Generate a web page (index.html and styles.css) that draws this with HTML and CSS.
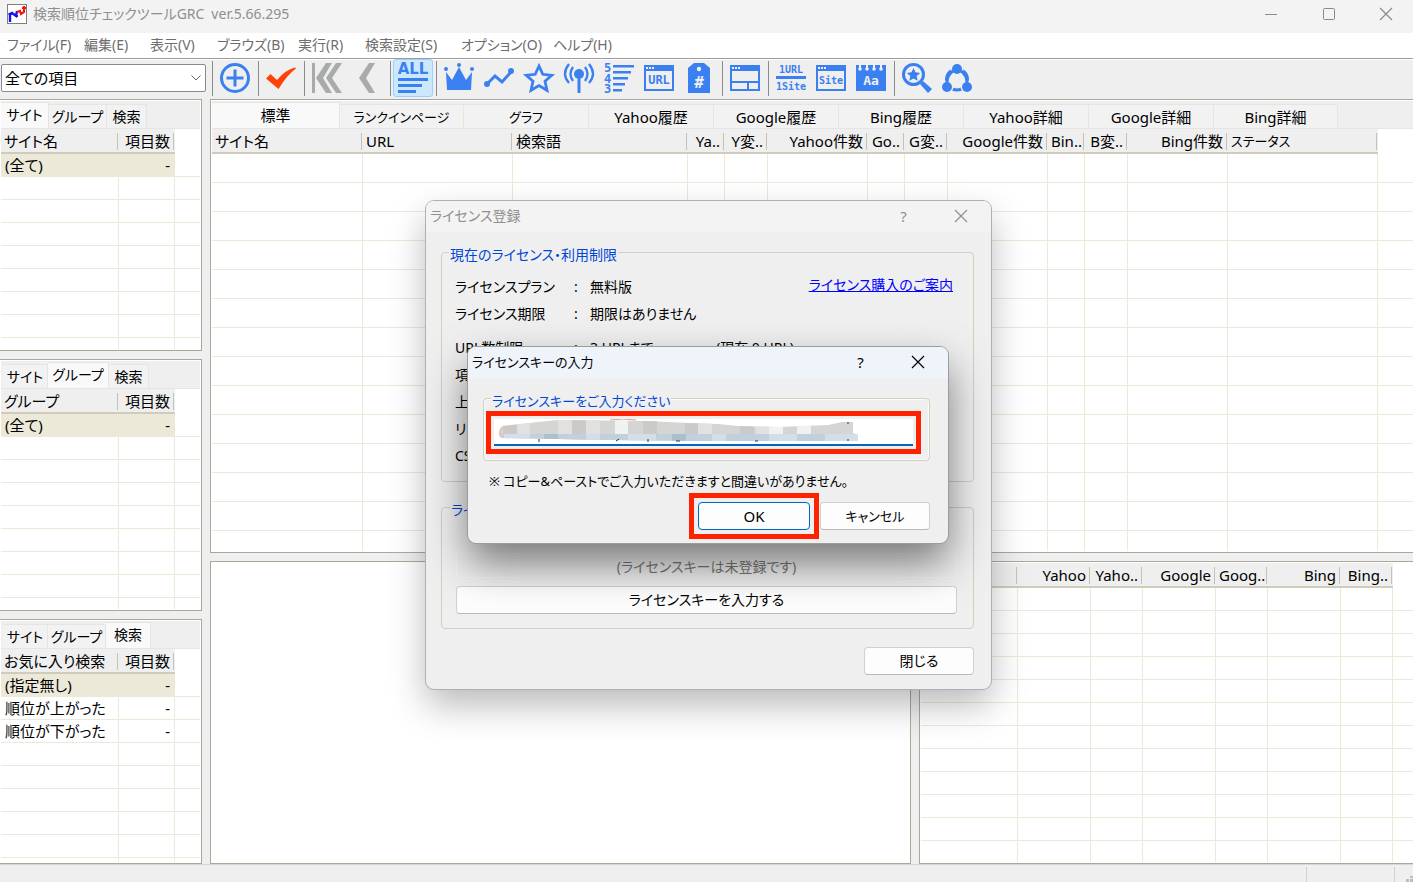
FILE: index.html
```html
<!DOCTYPE html>
<html lang="ja">
<head>
<meta charset="utf-8">
<title>検索順位チェックツールGRC</title>
<link rel="stylesheet" href="styles.css">
</head>
<body>
<div class="app">
  <header class="titlebar">
    <svg class="app-icon" width="20" height="20" viewBox="0 0 20 20"><rect x=".5" y=".5" width="19" height="19" fill="#fff" stroke="#808080"/><path d="M3 18V10L5 9L9 12L10 7" fill="none" stroke="#1414f0" stroke-width="2.4"/><path d="M1.500 10H5M8 12h3" stroke="#1414f0" stroke-width="2"/><path d="M10 8L13 7L14 10L17 8V2" fill="none" stroke="#f01414" stroke-width="2.2"/><path d="M15 4h4" stroke="#f01414" stroke-width="2"/></svg>
    <span class="title-text">検索順位チェックツールGRC&ensp;ver.5.66.295</span>
    <div class="window-controls">
      <button aria-label="最小化"><svg width="14" height="14"><path d="M1 7.500h12" stroke="#8a8a8a"/></svg></button>
      <button aria-label="最大化"><svg width="14" height="14"><rect x="1.500" y="1.500" width="11" height="11" rx="1" fill="none" stroke="#8a8a8a"/></svg></button>
      <button aria-label="閉じる"><svg width="14" height="14"><path d="M1 1l12 12M13 1L1 13" stroke="#8a8a8a" stroke-width="1.200"/></svg></button>
    </div>
  </header>

  <nav class="menubar">
    <button>ファイル(F)</button><button>編集(E)</button><button>表示(V)</button><button>ブラウズ(B)</button><button>実行(R)</button><button>検索設定(S)</button><button>オプション(O)</button><button>ヘルプ(H)</button>
  </nav>

  <div class="toolbar">
    <div class="filter-box">
      <select class="filter" aria-label="項目"><option>全ての項目</option></select>
      <svg class="chevron" width="10" height="6"><path d="M.5.5L5 5L9.500.5" fill="none" stroke="#666"/></svg>
    </div>
    <i class="sep"></i>
    <button class="tool" aria-label="追加"><svg viewBox="0 0 30 30"><circle cx="15" cy="15" r="13.500" fill="none" stroke="#3b80f0" stroke-width="3"/><path d="M15 6.500v17M6.500 15h17" stroke="#3b80f0" stroke-width="3"/></svg></button>
    <i class="sep"></i>
    <button class="tool" aria-label="チェック"><svg viewBox="0 0 30 30"><path d="M0 15.500L4.500 11L11 17Q19 7 29 4.500L30 5.500Q21 12 12.500 26Z" fill="#ff4206"/></svg></button>
    <i class="sep"></i>
    <button class="tool" aria-label="最初へ"><svg viewBox="0 0 30 30"><path d="M0 0h3v30H0zM14 0h6L11 15l9 15h-6L4 15zM24 0h6L20 15l10 15h-6L14 15z" fill="#a9aaab"/></svg></button>
    <button class="tool" aria-label="前へ"><svg viewBox="0 0 30 30"><path d="M17 0h6L14 15l9 15h-6L7 15z" fill="#a9aaab"/></svg></button>
    <i class="sep"></i>
    <button class="tool tool-active" aria-label="全て表示"><svg viewBox="0 0 30 30"><text x="15" y="11" font-size="15" text-anchor="middle" class="sans">ALL</text><path d="M0 15h30v3H0zM0 21h24v3H0zM0 27h18v3H0z"/></svg></button>
    <i class="sep"></i>
    <button class="tool" aria-label="王冠"><svg viewBox="0 0 30 30"><path d="M3 27L2 9l6 8 7-13 7 13 6-8-1 18z"/><circle cx="2" cy="6" r="2"/><circle cx="15" cy="2" r="2"/><circle cx="28" cy="6" r="2"/></svg></button>
    <button class="tool" aria-label="推移"><svg viewBox="0 0 30 30"><path d="M3 21l8-8 7 6 9-10" fill="none" stroke="#3b80f0" stroke-width="3"/><circle cx="3" cy="21" r="3"/><circle cx="27" cy="8" r="3"/></svg></button>
    <button class="tool" aria-label="スター"><svg viewBox="0 0 30 30"><path d="M15 3l3.800 8.300 9 1-6.800 6 2 9-8-4.700-8 4.700 2-9-6.800-6 9-1z" fill="none" stroke="#3b80f0" stroke-width="2.800"/></svg></button>
    <button class="tool" aria-label="アンテナ"><svg viewBox="0 0 30 30"><circle cx="15" cy="11" r="5"/><path d="M13.500 12h3v18h-3z"/><path d="M9 4q-5 7 0 14M5 1q-8 10 0 19M21 4q5 7 0 14M25 1q8 10 0 19" fill="none" stroke="#3b80f0" stroke-width="2.300"/></svg></button>
    <button class="tool" aria-label="順位"><svg viewBox="0 0 30 30"><text x="0" y="9" font-size="12">5</text><text x="0" y="20" font-size="12">4</text><text x="0" y="30" font-size="12">3</text><path d="M9 2h21v2.400H9zM9 8h18v2.400H9zM9 14h15v2.400H9zM9 20h12v2.400H9zM9 26h9v2.400H9z"/></svg></button>
    <button class="tool" aria-label="URL"><svg viewBox="0 0 30 30"><path d="M0 2h30v26H0zM2 8v18h26V8z" fill-rule="evenodd"/><path d="M2 4h2v2H2zM5 4h2v2H5zM8 4h2v2H8z" fill="#efefef"/><text x="15" y="21" font-size="12" text-anchor="middle">URL</text></svg></button>
    <button class="tool" aria-label="タグ"><svg viewBox="0 0 30 30"><path d="M4 30V5l6-5h10l6 5v25z"/><circle cx="15" cy="6" r="2.200" fill="#efefef"/><text x="15" y="25" font-size="16" text-anchor="middle" class="light">#</text></svg></button>
    <i class="sep"></i>
    <button class="tool" aria-label="分割"><svg viewBox="0 0 30 30"><path d="M0 2h30v26H0zM2 8v10h26V8zM2 20v6h15v-6zM19 20v6h9v-6z" fill-rule="evenodd"/><path d="M2 4h2v2H2zM5 4h2v2H5zM8 4h2v2H8z" fill="#efefef"/></svg></button>
    <i class="sep"></i>
    <button class="tool" aria-label="1URL 1Site"><svg viewBox="0 0 30 30"><text x="15" y="10" font-size="10" text-anchor="middle">1URL</text><path d="M0 13h30v3H0z"/><text x="15" y="27" font-size="10" text-anchor="middle">1Site</text></svg></button>
    <button class="tool" aria-label="サイト"><svg viewBox="0 0 30 30"><path d="M0 2h30v26H0zM2 8v18h26V8z" fill-rule="evenodd"/><path d="M2 4h2v2H2zM5 4h2v2H5zM8 4h2v2H8z" fill="#efefef"/><text x="15" y="21" font-size="10" text-anchor="middle">Site</text></svg></button>
    <button class="tool" aria-label="メモ"><svg viewBox="0 0 30 30"><path d="M0 2h30v26H0z"/><path d="M3 1h2v4H3zM10 1h2v4h-2zM17 1h2v4h-2zM24 1h2v4h-2z" fill="#efefef"/><g fill="#efefef"><circle cx="4" cy="6" r="1.800"/><circle cx="11" cy="6" r="1.800"/><circle cx="18" cy="6" r="1.800"/><circle cx="25" cy="6" r="1.800"/></g><text x="15" y="22" font-size="13" text-anchor="middle" class="light">Aa</text></svg></button>
    <i class="sep"></i>
    <button class="tool" aria-label="検索"><svg viewBox="0 0 30 30"><circle cx="11.500" cy="11.500" r="10" fill="none" stroke="#3b80f0" stroke-width="3"/><path d="M18 21l3-3 9 8-4 4z"/><path d="M11.500 5l2 4.300 4.700.6-3.500 3.200 1 4.700-4.200-2.400-4.200 2.400 1-4.700L4.800 9.900l4.700-.6z"/></svg></button>
    <button class="tool" aria-label="共有"><svg viewBox="0 0 30 30"><circle cx="15" cy="16.500" r="10.500" fill="none" stroke="#3b80f0" stroke-width="3"/><circle cx="15" cy="6" r="6.500" fill="#efefef"/><circle cx="5" cy="24" r="6.500" fill="#efefef"/><circle cx="25" cy="24" r="6.500" fill="#efefef"/><path d="M11 8Q5 12 5 20M19 8Q25 12 25 20" fill="none" stroke="#3b80f0" stroke-width="3"/><circle cx="15" cy="6" r="5"/><circle cx="5" cy="24" r="5"/><circle cx="25" cy="24" r="5"/></svg></button>
  </div>

  <main class="workspace">
    <aside class="sidebar">
      <section class="panel">
        <div class="tabs"><button class="tab wide active">サイト</button><button class="tab group">グループ</button><button class="tab">検索</button></div>
        <div class="table-box"><table class="list">
          <colgroup><col class="w118"><col class="w56"><col></colgroup>
          <thead><tr><th>サイト名</th><th class="num">項目数</th><td></td></tr></thead>
          <tbody><tr class="selected"><td>(全て)</td><td class="num">-</td><td></td></tr>
          <tr class="filler"><td></td><td></td><td></td></tr></tbody>
        </table></div>
      </section>
      <section class="panel">
        <div class="tabs inset"><button class="tab">サイト</button><button class="tab group active">グループ</button><button class="tab">検索</button></div>
        <div class="table-box"><table class="list">
          <colgroup><col class="w118"><col class="w56"><col></colgroup>
          <thead><tr><th>グループ</th><th class="num">項目数</th><td></td></tr></thead>
          <tbody><tr class="selected"><td>(全て)</td><td class="num">-</td><td></td></tr>
          <tr class="filler"><td></td><td></td><td></td></tr></tbody>
        </table></div>
      </section>
      <section class="panel">
        <div class="tabs inset"><button class="tab">サイト</button><button class="tab group">グループ</button><button class="tab active">検索</button></div>
        <div class="table-box"><table class="list">
          <colgroup><col class="w118"><col class="w56"><col></colgroup>
          <thead><tr><th>お気に入り検索</th><th class="num">項目数</th><td></td></tr></thead>
          <tbody><tr class="selected"><td>(指定無し)</td><td class="num">-</td><td></td></tr>
          <tr><td>順位が上がった</td><td class="num">-</td><td></td></tr>
          <tr><td>順位が下がった</td><td class="num">-</td><td></td></tr>
          <tr class="filler"><td></td><td></td><td></td></tr></tbody>
        </table></div>
      </section>
    </aside>

    <div class="content">
      <section class="panel open">
        <div class="tabs main-tabs"><button class="tab active">標準</button><button class="tab kana">ランクインページ</button><button class="tab kana">グラフ</button><button class="tab">Yahoo履歴</button><button class="tab">Google履歴</button><button class="tab">Bing履歴</button><button class="tab">Yahoo詳細</button><button class="tab">Google詳細</button><button class="tab">Bing詳細</button></div>
        <div class="table-box"><table class="list tall">
          <colgroup><col class="w151"><col class="w150"><col class="w175"><col class="w37"><col class="w43"><col class="w100"><col class="w37"><col class="w43"><col class="w100"><col class="w37"><col class="w43"><col class="w100"><col class="w150"><col></colgroup>
          <thead><tr><th>サイト名</th><th>URL</th><th>検索語</th><th class="num">Ya..</th><th class="num">Y変..</th><th class="num">Yahoo件数</th><th class="num">Go..</th><th class="num">G変..</th><th class="num">Google件数</th><th class="num">Bin..</th><th class="num">B変..</th><th class="num">Bing件数</th><th class="kana">ステータス</th><td></td></tr></thead>
          <tbody><tr class="filler"><td></td><td></td><td></td><td></td><td></td><td></td><td></td><td></td><td></td><td></td><td></td><td></td><td></td><td></td></tr></tbody>
        </table></div>
      </section>
      <div class="lower">
        <section class="panel"></section>
        <section class="panel open">
          <div class="table-box"><table class="list">
            <colgroup><col class="w97"><col class="w73"><col class="w52"><col class="w73"><col class="w52"><col class="w73"><col class="w52"><col></colgroup>
            <thead><tr><th></th><th class="num">Yahoo</th><th class="num">Yaho..</th><th class="num">Google</th><th class="num">Goog..</th><th class="num">Bing</th><th class="num">Bing..</th><td></td></tr></thead>
            <tbody><tr class="filler"><td></td><td></td><td></td><td></td><td></td><td></td><td></td><td></td></tr></tbody>
          </table></div>
        </section>
      </div>
    </div>
  </main>

  <footer class="statusbar"><span></span><span></span><span><svg width="8" height="6"><path d="M5 0h3v2H5zM1 3h3v3H1zM5 3h3v3H5z" fill="#bdbdbd"/></svg></span></footer>

  <section class="dialog license" aria-label="ライセンス登録">
    <header class="dialog-title"><span>ライセンス登録</span><button aria-label="ヘルプ">?</button><button aria-label="閉じる"><svg width="14" height="14"><path d="M1 1l12 12M13 1L1 13" stroke="currentColor" stroke-width="1.200"/></svg></button></header>
    <div class="dialog-body">
      <fieldset class="limits"><legend>現在のライセンス・利用制限</legend>
        <dl>
          <div><dt>ライセンスプラン</dt><dd>無料版</dd><a href="#">ライセンス購入のご案内</a></div>
          <div><dt>ライセンス期限</dt><dd>期限はありません</dd></div>
          <div class="spaced"><dt>URL数制限</dt><dd>3 URLまで</dd><span class="now">(現在 0 URL)</span></div>
          <div><dt>項目</dt></div>
          <div><dt>上</dt></div>
          <div><dt>リモ</dt></div>
          <div><dt>CS</dt></div>
        </dl>
      </fieldset>
      <fieldset class="key"><legend>ライセンスキー</legend>
        <input class="status" readonly aria-label="ライセンスキー" value="(ライセンスキーは未登録です)">
        <button class="btn">ライセンスキーを入力する</button>
      </fieldset>
      <div class="actions"><button class="btn">閉じる</button></div>
    </div>
  </section>

  <section class="dialog entry" aria-label="ライセンスキーの入力">
    <header class="dialog-title"><span class="kana">ライセンスキーの入力</span><button aria-label="ヘルプ">?</button><button aria-label="閉じる"><svg width="14" height="14"><path d="M1 1l12 12M13 1L1 13" stroke="currentColor" stroke-width="1.200"/></svg></button></header>
    <div class="dialog-body">
      <fieldset><legend class="kana">ライセンスキーをご入力ください</legend>
        <div class="key-field marked">
          <input aria-label="ライセンスキーをご入力ください">
          <svg class="mosaic" width="364" height="26" viewBox="0 0 364 26">
            <defs><clipPath id="blob"><path d="M5 7L14 6L40 3L60 1L150 2L190 4L220 5L240 7L280 8L330 6L344 3H355V14L360 16V22H200L110 21L60 20L5 19Q1 12 5 7Z"/></clipPath></defs>
            <path d="M112 1q12-2 26 0" stroke="#f0958c" fill="none"/>
            <path d="M1 14Q1 8 6 7V19Q1 20 1 14" fill="#f2b9b2"/>
            <g clip-path="url(#blob)">
              <path fill="#d5d5d3" d="M0 0h364v26H0z"/>
              <path fill="#e3e1e0" d="M19 0h13v26H19zM60 0h14v26H60zM88 0h14v26H88zM200 0h14v26h-14zM258 0h13v26h-13z"/>
              <path fill="#f0f1f2" d="M117 0h13v26h-13zM271 0h14v26h-14zM299 0h14v26h-14z"/>
              <path fill="#cbcac9" d="M5 0h14v26H5zM74 0h14v26H74zM145 0h14v26h-14zM187 0h13v26h-13zM242 0h14v26h-14z"/>
              <path fill="#bfd0de" d="M0 15h364v11H0z"/>
              <path fill="#d2dfe9" d="M6 15h26v11H6zM88 15h14v11H88zM130 15h28v11h-28zM214 15h14v11h-14zM271 15h28v11h-28zM327 15h37v11h-37z"/>
              <path fill="#acbfce" d="M46 15h14v11H46zM174 15h14v11h-14z"/>
            </g>
            <path d="M41 20v3M118 22l3-2M150 20v3M178 22h4M257 22h3M350 3v2M350 20v2" stroke="#333"/>
          </svg>
        </div>
      </fieldset>
      <p class="kana">※ コピー&amp;ペーストでご入力いただきますと間違いがありません。</p>
      <div class="actions"><span class="ok-mark marked"><button class="btn ok">OK</button></span><button class="btn kana">キャンセル</button></div>
    </div>
  </section>
</div>
</body>
</html>
```
FILE: styles.css
```css
* { box-sizing: border-box; }

body {
  margin: 0;
  font: 15px/20px "Noto Sans", "Noto Sans CJK JP", sans-serif;
  font-feature-settings: "palt";
  color: #000;
  background: #efefef;
}

button, input, select {
  font: inherit;
  font-feature-settings: inherit;
  color: inherit;
  margin: 0;
  padding: 0;
  border: 0;
  background: none;
}

.app {
  position: relative;
  display: flex;
  flex-direction: column;
  height: 100vh;
  overflow: hidden;
}

/* Title bar and menu */
.titlebar {
  display: flex;
  flex: none;
  align-items: center;
  height: 33px;
  padding: 0 0 5px 7px;
  background: #f3f3f3;
  color: #8f8f8f;
  font-size: 14px;
}
.title-text { margin-left: 6px; white-space: nowrap; }
.window-controls { display: flex; margin-left: auto; }
.window-controls button { display: grid; place-items: center; width: 58px; height: 28px; }
.window-controls button:last-child { width: 55px; padding-right: 0; }

.menubar {
  display: grid;
  grid-template-columns: 77px 66px 67px 81px 67px 96px 92px auto;
  flex: none;
  height: 26px;
  padding: 0 0 2px 7px;
  background: #fff;
  border-bottom: 1px solid #9c9c9c;
  font-size: 14px;
}
.menubar button { text-align: left; color: #6d6d6d; white-space: nowrap; }

/* Toolbar */
.toolbar {
  display: flex;
  flex: none;
  align-items: center;
  height: 40px;
  padding: 0 0 3px 1px;
  border-top: 1px solid #fff;
}
.filter-box { position: relative; flex: none; width: 205px; margin-right: 3px; }
.filter {
  appearance: none;
  display: block;
  width: 100%;
  height: 28px;
  padding: 0 3px;
  border: 1px solid #8a8a8a;
  border-radius: 2px;
  background: #fff;
}
.chevron { position: absolute; right: 5px; top: 11px; pointer-events: none; }
.sep { flex: none; width: 6px; height: 35px; background: linear-gradient(#8c8c8c, #8c8c8c) 3px 0 / 1px 100% no-repeat; }
.tool { display: grid; place-items: center; flex: none; width: 40px; height: 38px; }
.tool svg { width: 30px; height: 30px; fill: #3b80f0; overflow: visible; }
.tool text { font-family: "DejaVu Sans Mono", monospace; font-weight: bold; }
.tool .sans { font-family: "DejaVu Sans", sans-serif; }
.tool .light { fill: #efefef; }
.tool-active { background: #cce8ff; border: 1px solid #99d1ff; border-radius: 3px; }

/* Panels */
.workspace {
  display: grid;
  grid-template-columns: 202px minmax(0, 1fr);
  gap: 8px;
  flex: 1;
  min-height: 0;
}
.sidebar { display: grid; grid-template-rows: 252px 252px minmax(0, 1fr); gap: 8px; min-height: 0; }
.content { display: grid; grid-template-rows: 454px minmax(0, 1fr); gap: 8px; min-height: 0; }
.lower { display: grid; grid-template-columns: minmax(0, 1fr) 494px; gap: 8px; min-height: 0; }
.panel {
  display: flex;
  flex-direction: column;
  min-height: 0;
  padding: 1px;
  overflow: hidden;
  background: #fff;
  border: 1px solid #aca899;
}
.sidebar .panel { border-left: 0; }
.panel.open { border-right: 0; padding-right: 0; }

.tabs { display: flex; flex: none; align-items: flex-end; height: 28px; padding-top: 1px; background: #efefef; border-bottom: 1px solid #e5e5e5; }
.tabs.inset { padding-left: 2px; }
.tab { width: 40px; height: 24px; padding-top: 1px; background: #f2f2f2; border: 1px solid #e5e5e5; border-width: 1px 1px 0 0; line-height: 20px; white-space: nowrap; }
.tab.active { height: 26px; background: #f9f9f9; padding-top: 0; padding-bottom: 1px; }
.sidebar .tab { font-size: 14px; }
.tab:first-child { width: 45px; }
.tab.wide { width: 48px; }
.tab.group { width: 58px; }
.tab.group.active { width: 61px; }
.tab.active:last-child { width: 45px; }
.main-tabs .tab { width: 125px; }
.main-tabs .tab.active { width: 128px; }
.main-tabs .tab:nth-child(2), .main-tabs .tab:last-child { width: 124px; }

.table-box { flex: 1; min-height: 0; overflow: hidden; }
.list { width: 100%; height: 100%; table-layout: fixed; border-collapse: separate; border-spacing: 0; }
.list th, .list td { padding: 0 4px; height: 23px; line-height: 20px; white-space: nowrap; overflow: hidden; text-align: left; font-weight: normal; }
.list th {
  height: 25px;
  padding: 1px 5px 0 3px;
  border-bottom: 2px solid #d0ccbc;
  background: linear-gradient(#c5c2b2, #c5c2b2) right 1px top 4px / 1px 17px no-repeat #efefef;
}
.list thead td { height: 25px; border: 0; }
.list tbody td { border-right: 1px solid #ece9d8; border-bottom: 1px solid #ece9d8; }
.list tbody td:last-child { border-right: 0; }
.list .num { text-align: right; }
.list .selected td:not(:last-child) { background: #ece9d8; }
.list .filler td {
  height: auto;
  border-bottom: 0;
  background: repeating-linear-gradient(#fff 0 22px, #ece9d8 22px 23px);
}
.list.tall .filler td { background: repeating-linear-gradient(#fff 0 28px, #ece9d8 28px 29px); }
.w118 { width: 118px; }
.w56 { width: 56px; }
.w151 { width: 151px; }
.w150 { width: 150px; }
.w175 { width: 175px; }
.w37 { width: 37px; }
.w43 { width: 43px; }
.w100 { width: 100px; }
.w97 { width: 97px; }
.w73 { width: 73px; }
.w52 { width: 52px; }

/* Smaller size for runs that are mostly kana */
.list .kana, .tab.kana, .dialog .kana { font-size: 13px; }

.statusbar { display: grid; grid-template-columns: 1fr 88px 19px; flex: none; height: 18px; padding-top: 2px; border-top: 1px solid #d7d7d7; }
.statusbar span + span { border-left: 1px solid #d0d0d0; }
.statusbar span:last-child { display: flex; align-items: flex-end; justify-content: flex-end; }

/* Dialogs */
.dialog { position: absolute; border-radius: 8px; background: #efefef; font-size: 14px; }
.dialog-title { display: flex; align-items: center; height: 31px; border-radius: 8px 8px 0 0; padding: 0 2px 1px 4px; }
.dialog-title span { flex: 1; white-space: nowrap; }
.dialog-title button { display: grid; place-items: center; width: 57px; height: 30px; font-size: 15px; }
.license {
  left: 426px;
  top: 201px;
  width: 565px;
  box-shadow: 0 0 0 1px #b0b0b0, 0 16px 36px rgba(0, 0, 0, .28);
}
.license .dialog-title { background: #f3f3f3; color: #8f8f8f; }
.entry {
  left: 468px;
  top: 347px;
  width: 480px;
  box-shadow: 0 0 0 1px #9c9c9c, 0 20px 42px rgba(0, 0, 0, .5);
}
.entry .dialog-title { background: #eff3fa; }
.dialog-body { padding: 8px 17px 14px 15px; }
.entry .dialog-body { padding: 8px 18px 13px 15px; }

fieldset { min-width: 0; margin: 0; padding: 9px 16px 14px 10px; border: 1px solid #d0d0bf; border-radius: 4px; box-shadow: inset 0 0 0 1px #fafafa; }
legend { margin-left: -3px; padding: 6px 1px 0; line-height: 18px; color: #0046d5; background: #efefef; white-space: nowrap; }
.license fieldset { padding: 9px 16px 12px 13px; box-shadow: none; }
.license legend { margin-left: -6px; }
.license .key legend { background: none; }
.license .key { margin-top: 13px; padding: 34px 16px 14px 14px; }
dl { margin: 0; }
dl div { display: flex; align-items: center; height: 27px; white-space: nowrap; }
dl .spaced { margin-top: 7px; }
dt { width: 119px; }
dd { width: 142px; margin: 0; }
dd::before { content: ":"; display: inline-block; width: 16px; }
dl a { margin: 0 4px 4px auto; color: #00f; }
.status { display: block; width: 100%; height: 25px; margin-bottom: 8px; border: 1px solid rgba(255, 255, 255, .35); text-align: center; color: #777; }
.btn { width: 110px; height: 28px; border: 1px solid #d0d0d0; border-bottom-color: #bababa; border-radius: 4px; background: #fdfdfd; white-space: nowrap; }
.key .btn { display: block; width: 100%; }
.actions { display: flex; justify-content: flex-end; gap: 10px; margin-top: 18px; }
.entry .actions { margin-top: 10px; }
.entry p { margin: 10px 0 0 6px; padding-bottom: 1px; white-space: nowrap; }
.btn.ok { display: block; width: 112px; border-color: #0067c0; font-size: 15px; }
.marked { outline: 5px solid #ff2200; outline-offset: 3px; }
.ok-mark { outline-offset: 4px; }
.key-field { position: relative; }
.key-field input { display: block; width: 100%; height: 27px; padding: 0 4px; background: #fff; border-bottom: 2px solid #0067c0; outline: 0; }
.mosaic { position: absolute; left: 4px; top: 0; }
```
